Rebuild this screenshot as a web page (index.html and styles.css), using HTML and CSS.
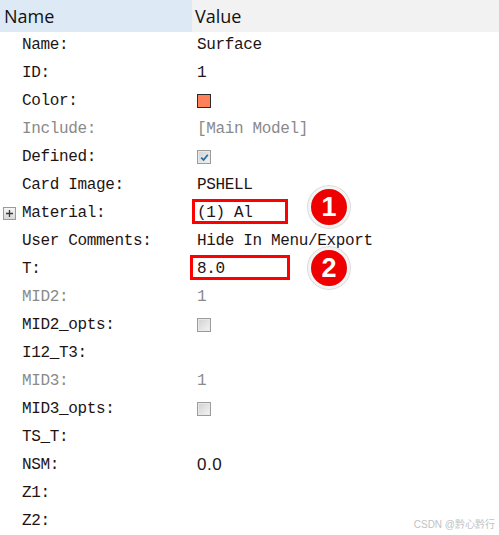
FILE: index.html
```html
<!DOCTYPE html>
<html>
<head>
<meta charset="utf-8">
<link rel="stylesheet" href="styles.css">
</head>
<body>
<div class="panel">
  <div class="head">
    <div class="hcell hname">Name</div>
    <div class="hcell hvalue">Value</div>
  </div>
  <div class="rows">
    <div class="row"><div class="lab">Name:</div><div class="val">Surface</div></div>
    <div class="row"><div class="lab">ID:</div><div class="val">1</div></div>
    <div class="row"><div class="lab">Color:</div><div class="val"><span class="swatch"></span></div></div>
    <div class="row dim"><div class="lab">Include:</div><div class="val">[Main Model]</div></div>
    <div class="row"><div class="lab">Defined:</div><div class="val"><span class="cb">
      <svg width="9" height="9" viewBox="0 0 9 9"><path d="M1.2 4.6 L3.6 7 L7.8 1.8" fill="none" stroke="#1f6fa8" stroke-width="1.8"/></svg></span></div></div>
    <div class="row"><div class="lab">Card Image:</div><div class="val">PSHELL</div></div>
    <div class="row"><div class="lab"><span class="plus"><svg width="11" height="11" viewBox="0 0 11 11"><path d="M5.5 2 V9 M2 5.5 H9" stroke="#3a3a3a" stroke-width="1.3"/></svg></span>Material:</div><div class="val">(1) Al</div></div>
    <div class="row"><div class="lab">User Comments:</div><div class="val">Hide In Menu/Export</div></div>
    <div class="row"><div class="lab">T:</div><div class="val">8.0</div></div>
    <div class="row dim"><div class="lab">MID2:</div><div class="val">1</div></div>
    <div class="row"><div class="lab">MID2_opts:</div><div class="val"><span class="cb"></span></div></div>
    <div class="row"><div class="lab">I12_T3:</div><div class="val"></div></div>
    <div class="row dim"><div class="lab">MID3:</div><div class="val">1</div></div>
    <div class="row"><div class="lab">MID3_opts:</div><div class="val"><span class="cb"></span></div></div>
    <div class="row"><div class="lab">TS_T:</div><div class="val"></div></div>
    <div class="row"><div class="lab">NSM:</div><div class="val sans">0.0</div></div>
    <div class="row"><div class="lab">Z1:</div><div class="val"></div></div>
    <div class="row"><div class="lab">Z2:</div><div class="val"></div></div>
  </div>
  <div class="mark box1"></div>
  <div class="mark box2"></div>
  <div class="badge b1">1</div>
  <div class="badge b2">2</div>
  <div class="wm">CSDN @黔心黔行</div>
</div>
</body>
</html>
```
FILE: styles.css
```css
html, body {
  margin: 0;
  padding: 0;
  background: #ffffff;
}
.panel {
  position: relative;
  width: 499px;
  height: 535px;
  overflow: hidden;
}
.head {
  display: grid;
  grid-template-columns: 192px 1fr;
  height: 29px;
  border-bottom: 1px solid #d3dde4;
}
.hcell {
  font-family: "Open Sans", "Noto Sans", sans-serif;
  font-size: 18px;
  color: #111;
  line-height: 32px;
}
.hname {
  background: #ddeaf6;
  padding-left: 4px;
}
.hvalue {
  background: #f2f2f2;
  padding-left: 3px;
}
.rows {
  display: flex;
  flex-direction: column;
  padding-top: 1px;
}
.row {
  display: grid;
  grid-template-columns: 192px 1fr;
  height: 28px;
  align-items: center;
  font-family: "Liberation Mono", "DejaVu Sans Mono", monospace;
  font-size: 16px;
  letter-spacing: -0.35px;
  color: #1e1414;
}
.lab {
  display: flex;
  align-items: center;
  padding-left: 22px;
  position: relative;
}
.val {
  padding-left: 5px;
  display: flex;
  align-items: center;
}
.dim {
  color: #8a8a8a;
}
.sans {
  font-family: "Liberation Sans", sans-serif;
  font-size: 17px;
  letter-spacing: 0.5px;
}
.plus {
  position: absolute;
  left: 3px;
  top: 50%;
  margin-top: -6px;
  width: 11px;
  height: 11px;
  border: 1px solid #9a9a9a;
  background: linear-gradient(#f6f6f6, #d8d8d8);
  display: flex;
}
.swatch {
  display: inline-block;
  width: 12px;
  height: 12px;
  background: #ff8059;
  border: 1px solid #2a2a2a;
}
.cb {
  display: inline-flex;
  align-items: center;
  justify-content: center;
  width: 12px;
  height: 12px;
  border: 1px solid #9c9c9c;
  background: linear-gradient(135deg, #d0d0d0, #f4f4f4);
  box-shadow: inset 0 0 0 1px #e8e8e8;
}
.mark {
  position: absolute;
  border: 3px solid #ff0000;
}
.box1 {
  left: 192px;
  top: 199px;
  width: 90px;
  height: 19px;
}
.box2 {
  left: 190px;
  top: 255px;
  width: 94px;
  height: 19px;
}
.badge {
  position: absolute;
  width: 36px;
  height: 36px;
  border-radius: 50%;
  background: #ee0000;
  border: 3px solid #f4f4f4;
  box-shadow: 0 0 0 1px #dddddd;
  color: #fff;
  font-family: "Liberation Sans", sans-serif;
  font-weight: bold;
  font-size: 27px;
  line-height: 37px;
  text-align: center;
}
.b1 {
  left: 308px;
  top: 186px;
}
.b2 {
  left: 308px;
  top: 247px;
}
.wm {
  position: absolute;
  right: 4px;
  bottom: 4px;
  font-family: "Liberation Sans", "Noto Sans CJK SC", sans-serif;
  font-size: 10px;
  color: #c2c2c2;
}
```
